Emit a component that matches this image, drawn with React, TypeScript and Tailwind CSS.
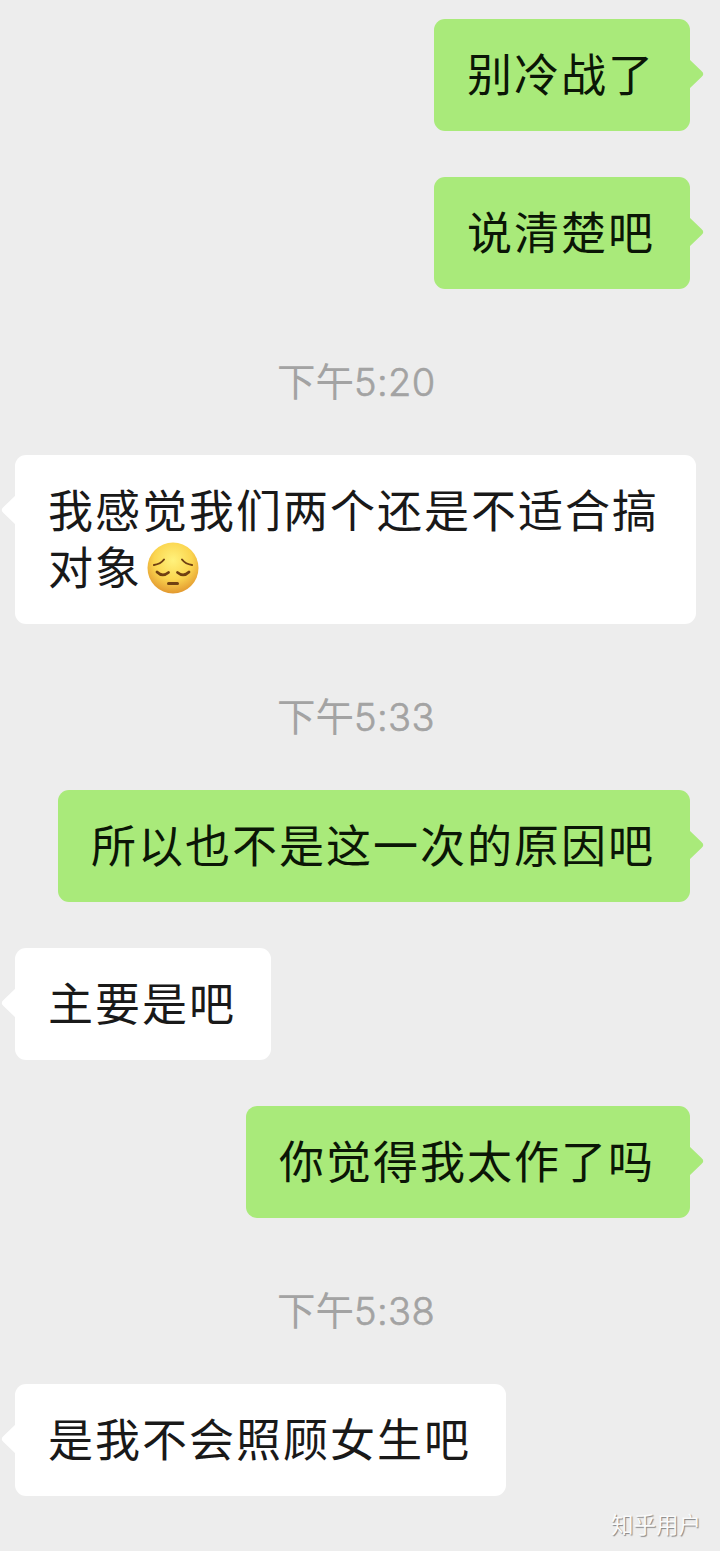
interface Message {
  kind: 'mine' | 'theirs' | 'time'
  text: string
  sad?: boolean
}

const messages: Message[] = [
  { kind: 'mine', text: '别冷战了' },
  { kind: 'mine', text: '说清楚吧' },
  { kind: 'time', text: '5:20' },
  { kind: 'theirs', text: '我感觉我们两个还是不适合搞对象', sad: true },
  { kind: 'time', text: '5:33' },
  { kind: 'mine', text: '所以也不是这一次的原因吧' },
  { kind: 'theirs', text: '主要是吧' },
  { kind: 'mine', text: '你觉得我太作了吗' },
  { kind: 'time', text: '5:38' },
  { kind: 'theirs', text: '是我不会照顾女生吧' },
]

export default function App() {
  return (
    <main className="relative flex h-[1551px] w-[720px] flex-col overflow-hidden bg-[#ededed] pt-[19px] pr-[24px] pl-[15px] font-['Noto_Sans_CJK_SC',sans-serif]">
      {messages.map((m, i) =>
        m.kind === 'time' ? (
          <TimeLabel key={i} time={m.text} />
        ) : (
          <Bubble key={i} message={m} />
        ),
      )}
      <span className="absolute right-[19px] bottom-[15px] text-[22.5px] leading-[26px] text-[#fafafa] [text-shadow:1px_1px_1px_rgba(0,0,0,0.45)]">
        知乎用户
      </span>
    </main>
  )
}

function TimeLabel({ time }: { time: string }) {
  return (
    <div className="-mt-[46px] flex h-[166px] shrink-0 items-start pt-[65px] pl-[262px] text-[38.5px] leading-[56px] text-[#a3a3a3]">
      <span className="-mt-[3px] font-normal">下午</span>
      <span className="font-['Inter',sans-serif] text-[38px] font-light tracking-[0.4px] [-webkit-text-stroke:0.6px_#a3a3a3]">
        {time}
      </span>
    </div>
  )
}

function Bubble({ message }: { message: Message }) {
  const mine = message.kind === 'mine'
  return (
    <div
      className={
        mine
          ? 'relative mr-[6px] mb-[46px] shrink-0 self-end rounded-[11px] bg-[#a9ea7a] pt-[26px] pr-[35px] pb-[29.5px] pl-[33px] text-[#0b1606]'
          : 'relative mb-[46px] max-w-[681px] shrink-0 self-start rounded-[11px] bg-white pt-[26px] pr-[35px] pb-[29.5px] pl-[33px] text-[#191919]'
      }
    >
      <p className="text-[45px] leading-[56.5px] tracking-[2px]">
        {message.text}
        {message.sad && <PensiveFace />}
      </p>
      {mine ? (
        <svg viewBox="0 0 15 30" className="absolute top-[40px] -right-[14px] h-[30px] w-[15px]">
          <path d="M0 0 L12.5 12 Q16 15 12.5 18 L0 30Z" fill="#a9ea7a" />
        </svg>
      ) : (
        <svg viewBox="0 0 15 30" className="absolute top-[40px] -left-[14px] h-[30px] w-[15px]">
          <path d="M15 0 L2.5 12 Q-1 15 2.5 18 L15 30Z" fill="#fff" />
        </svg>
      )}
    </div>
  )
}

function PensiveFace() {
  return (
    <svg viewBox="0 0 52 52" className="-my-[6px] ml-[5px] inline-block h-[52px] w-[52px] align-[-3px]" fill="none">
      <defs>
        <radialGradient id="face" cx="0.5" cy="0.35" r="0.68">
          <stop offset="0" stopColor="#fff27c" />
          <stop offset="0.55" stopColor="#fbd650" />
          <stop offset="1" stopColor="#e0922c" />
        </radialGradient>
      </defs>
      <circle cx="26" cy="26" r="25.5" fill="url(#face)" />
      <g stroke="#704012" strokeLinecap="round">
        <path d="M7 23Q13.5 22 17 17.5" strokeWidth="2" />
        <path d="M45 23Q38.5 22 35 17.5" strokeWidth="2" />
        <path d="M10 30Q15.5 35.5 21.5 30.5" strokeWidth="2.8" />
        <path d="M30.5 30.5Q36.5 35.5 42 30" strokeWidth="2.8" />
        <path d="M21.5 41.5H30.5" strokeWidth="3" />
      </g>
    </svg>
  )
}
